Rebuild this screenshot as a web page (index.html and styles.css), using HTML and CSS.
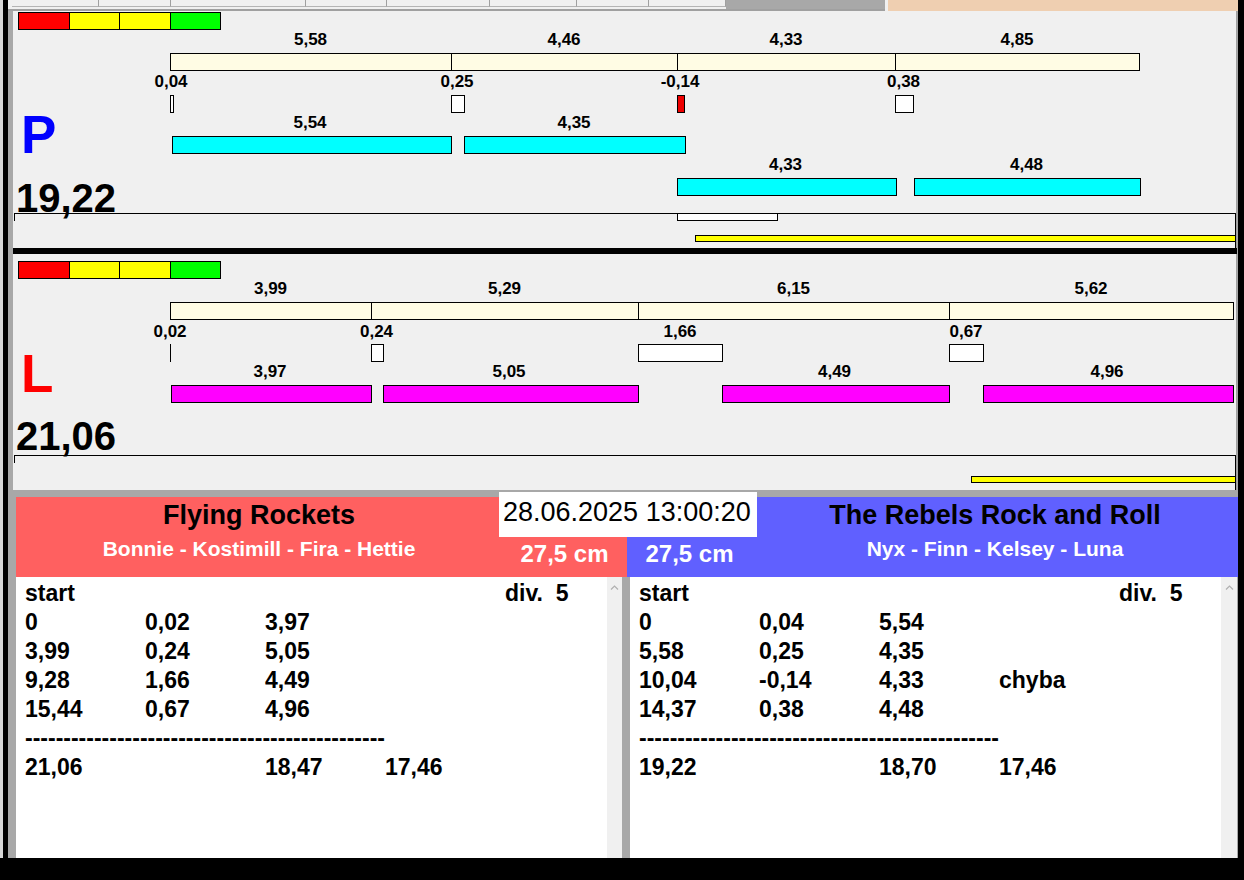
FILE: index.html
```html
<!DOCTYPE html>
<html>
<head>
<meta charset="utf-8">
<link rel="stylesheet" href="styles.css">
</head>
<body>
<div class="screen">
  <div class="edge"></div>
  <div class="client">
    <div class="tabs">
      <div class="tabrow">
        <div class="tab t1"></div>
        <div class="tab t2"></div>
        <div class="tab t3"></div>
        <div class="tab t4"></div>
        <div class="tab t5"></div>
        <div class="tab t6"></div>
        <div class="tab t7"></div>
        <div class="tab t8"></div>
        <div class="tab-empty"></div>
      </div>
      <div class="tabgap"></div>
      <div class="peach"></div>
    </div>

    <div class="panel panel-p">
      <div class="scale"><i class="seg s-red"></i><i class="seg s-yel"></i><i class="seg s-yel"></i><i class="seg s-grn"></i></div>
      <div class="letter letter-p">P</div>
      <div class="total">19,22</div>
      <div class="track">
        <div class="tbar tbar-white" style="left:663px;width:101px"></div>
        <div class="tbar tbar-yellow" style="left:681px;width:541px"></div>
      </div>

      <div class="lbl pu-l1" style="left:297.5px">5,58</div>
      <div class="lbl pu-l1" style="left:551px">4,46</div>
      <div class="lbl pu-l1" style="left:773px">4,33</div>
      <div class="lbl pu-l1" style="left:1004px">4,85</div>
      <div class="bar cream pu-b1" style="left:157px;width:282px"></div>
      <div class="bar cream pu-b1" style="left:438px;width:227px"></div>
      <div class="bar cream pu-b1" style="left:664px;width:219px"></div>
      <div class="bar cream pu-b1" style="left:882px;width:245px"></div>

      <div class="lbl pu-l2" style="left:158px">0,04</div>
      <div class="lbl pu-l2" style="left:444px">0,25</div>
      <div class="lbl pu-l2" style="left:667px">-0,14</div>
      <div class="lbl pu-l2" style="left:890.5px">0,38</div>
      <div class="bar bx-white pu-b2" style="left:157px;width:4px"></div>
      <div class="bar bx-white pu-b2" style="left:438px;width:14px"></div>
      <div class="bar bx-red pu-b2" style="left:664px;width:8px"></div>
      <div class="bar bx-white pu-b2" style="left:882px;width:19px"></div>

      <div class="lbl pu-l3" style="left:297px">5,54</div>
      <div class="lbl pu-l3" style="left:561px">4,35</div>
      <div class="bar cyan pu-b3" style="left:159px;width:280px"></div>
      <div class="bar cyan pu-b3" style="left:451px;width:222px"></div>

      <div class="lbl pu-l4" style="left:772.5px">4,33</div>
      <div class="lbl pu-l4" style="left:1013.5px">4,48</div>
      <div class="bar cyan pu-b4" style="left:664px;width:220px"></div>
      <div class="bar cyan pu-b4" style="left:901px;width:227px"></div>
    </div>

    <div class="divider-black"></div>

    <div class="panel panel-l">
      <div class="scale"><i class="seg s-red"></i><i class="seg s-yel"></i><i class="seg s-yel"></i><i class="seg s-grn"></i></div>
      <div class="letter letter-l">L</div>
      <div class="total">21,06</div>
      <div class="track">
        <div class="tbar tbar-yellow" style="left:957px;width:265px"></div>
      </div>

      <div class="lbl pl-l1" style="left:257.5px">3,99</div>
      <div class="lbl pl-l1" style="left:491.5px">5,29</div>
      <div class="lbl pl-l1" style="left:780.5px">6,15</div>
      <div class="lbl pl-l1" style="left:1078px">5,62</div>
      <div class="bar cream pl-b1" style="left:157px;width:202px"></div>
      <div class="bar cream pl-b1" style="left:358px;width:268px"></div>
      <div class="bar cream pl-b1" style="left:625px;width:312px"></div>
      <div class="bar cream pl-b1" style="left:936px;width:285px"></div>

      <div class="lbl pl-l2" style="left:157px">0,02</div>
      <div class="lbl pl-l2" style="left:363.5px">0,24</div>
      <div class="lbl pl-l2" style="left:667px">1,66</div>
      <div class="lbl pl-l2" style="left:953px">0,67</div>
      <div class="bar bx-line pl-b2" style="left:157px;width:1px"></div>
      <div class="bar bx-white pl-b2" style="left:358px;width:13px"></div>
      <div class="bar bx-white pl-b2" style="left:625px;width:85px"></div>
      <div class="bar bx-white pl-b2" style="left:936px;width:35px"></div>

      <div class="lbl pl-l3" style="left:257px">3,97</div>
      <div class="lbl pl-l3" style="left:496px">5,05</div>
      <div class="lbl pl-l3" style="left:821.5px">4,49</div>
      <div class="lbl pl-l3" style="left:1094px">4,96</div>
      <div class="bar mag pl-b3" style="left:158px;width:201px"></div>
      <div class="bar mag pl-b3" style="left:370px;width:256px"></div>
      <div class="bar mag pl-b3" style="left:709px;width:228px"></div>
      <div class="bar mag pl-b3" style="left:970px;width:251px"></div>
    </div>

    <div class="gap"></div>

    <div class="bottom">
      <div class="teams">
        <div class="team team-red">
          <div class="names">
            <div class="team-title">Flying Rockets</div>
            <div class="members">Bonnie - Kostimill - Fira - Hettie</div>
          </div>
          <div class="cm">27,5 cm</div>
        </div>
        <div class="team team-blue">
          <div class="cm">27,5 cm</div>
          <div class="names">
            <div class="team-title">The Rebels Rock and Roll</div>
            <div class="members">Nyx - Finn - Kelsey - Luna</div>
          </div>
        </div>
      </div>
      <div class="lists">
        <div class="list">
          <div class="row"><span>start</span><span></span><span></span><span></span><span>div.&nbsp;&nbsp;5</span></div>
          <div class="row"><span>0</span><span>0,02</span><span>3,97</span><span></span><span></span></div>
          <div class="row"><span>3,99</span><span>0,24</span><span>5,05</span><span></span><span></span></div>
          <div class="row"><span>9,28</span><span>1,66</span><span>4,49</span><span></span><span></span></div>
          <div class="row"><span>15,44</span><span>0,67</span><span>4,96</span><span></span><span></span></div>
          <div class="dashes">-----------------------------------------------</div>
          <div class="row"><span>21,06</span><span></span><span>18,47</span><span>17,46</span><span></span></div>
        </div>
        <div class="scroll"><svg width="9" height="5" viewBox="0 0 9 5"><polyline points="1,4.5 4.5,1 8,4.5" fill="none" stroke="#b0b0b0" stroke-width="1.2"/></svg></div>
        <div class="split"></div>
        <div class="list">
          <div class="row"><span>start</span><span></span><span></span><span></span><span>div.&nbsp;&nbsp;5</span></div>
          <div class="row"><span>0</span><span>0,04</span><span>5,54</span><span></span><span></span></div>
          <div class="row"><span>5,58</span><span>0,25</span><span>4,35</span><span></span><span></span></div>
          <div class="row"><span>10,04</span><span>-0,14</span><span>4,33</span><span>chyba</span><span></span></div>
          <div class="row"><span>14,37</span><span>0,38</span><span>4,48</span><span></span><span></span></div>
          <div class="dashes">-----------------------------------------------</div>
          <div class="row"><span>19,22</span><span></span><span>18,70</span><span>17,46</span><span></span></div>
        </div>
        <div class="scroll scroll-r"><svg width="9" height="5" viewBox="0 0 9 5"><polyline points="1,4.5 4.5,1 8,4.5" fill="none" stroke="#b0b0b0" stroke-width="1.2"/></svg></div>
      </div>
      <div class="clock">28.06.2025 13:00:20</div>
    </div>
  </div>
</div>
</body>
</html>
```

FILE: styles.css
```css
html, body {
  margin: 0;
  padding: 0;
  background: #000;
}
body {
  font-family: "Liberation Sans", Arial, sans-serif;
  color: #000;
}
.screen {
  width: 1244px;
  height: 880px;
  display: flex;
  align-items: flex-start;
  background: #000;
  overflow: hidden;
}
.edge {
  width: 3px;
  height: 858px;
  background: #d8d8d8;
  flex: none;
}
.client {
  margin-left: 5px;
  width: 1230px;
  height: 858px;
  background: #a8a8a8;
  display: flex;
  flex-direction: column;
  flex: none;
}

/* tab strip (cut off at the top) */
.tabs {
  display: flex;
  height: 11px;
  flex: none;
}
.tabrow {
  display: flex;
  width: 877px;
  box-sizing: border-box;
  padding-left: 4px;
  background: #f0f0f0;
  border-bottom: 2px solid #a0a0a0;
}
.tab {
  box-sizing: border-box;
  height: 7px;
  border-right: 1px solid #a0a0a0;
  border-bottom: 1px solid #b4b4b4;
}
.t1 { width: 87px; }
.t2 { width: 72px; }
.t3 { width: 135px; }
.t4 { width: 81px; }
.t5 { width: 103px; }
.t6 { width: 87px; }
.t7 { width: 72px; }
.t8 { width: 77px; }
.tab-empty {
  width: 159px;
  height: 9px;
  background: #a8a8a8;
}
.tabgap {
  width: 3px;
  background: #f0f0f0;
}
.peach {
  flex: 1;
  background: #efcfb1;
}

/* chart panels */
.panel {
  position: relative;
  margin-left: 5px;
  width: 1224px;
  box-sizing: border-box;
  background: #f0f0f0;
  border-right: 1px solid #a0a0a0;
  display: flex;
  flex-direction: column;
  align-items: flex-start;
  flex: none;
}
.panel-p { height: 237px; }
.panel-l { height: 236px; }
.divider-black {
  margin-left: 5px;
  width: 1224px;
  height: 6px;
  background: #000;
  flex: none;
}
.gap {
  height: 7px;
  flex: none;
}

.scale {
  display: flex;
  width: 203px;
  height: 18px;
  box-sizing: border-box;
  border: 1px solid #000;
  margin-left: 5px;
}
.panel-p .scale { margin-top: 1px; }
.panel-l .scale { margin-top: 7px; }
.seg {
  flex: 1;
  border-right: 1px solid #000;
}
.seg:last-child { border-right: 0; }
.s-red { background: #ff0000; }
.s-yel { background: #ffff00; }
.s-grn { background: #00ff00; }

.letter {
  font-size: 53px;
  font-weight: bold;
  line-height: 53px;
  margin-left: 8px;
}
.letter-p { color: #0000ff; margin-top: 78px; }
.letter-l { color: #ff0000; margin-top: 68px; }

.total {
  font-size: 40px;
  font-weight: bold;
  line-height: 30px;
  margin-left: 3px;
}
.panel-p .total { margin-top: 22px; }
.panel-l .total { margin-top: 21px; }

.track {
  position: relative;
  margin-top: auto;
  margin-left: 1px;
  width: 1222px;
  height: 35px;
  box-sizing: border-box;
  border-top: 1px solid #000;
  border-right: 1px solid #000;
}
.track::before {
  content: "";
  position: absolute;
  left: 0;
  top: 0;
  width: 1px;
  height: 7px;
  background: #000;
}
.tbar {
  position: absolute;
  box-sizing: border-box;
  border: 1px solid #000;
}
.tbar-white {
  top: -1px;
  height: 8px;
  background: #fff;
}
.tbar-yellow {
  height: 7px;
  background: #ffff00;
}
.panel-p .tbar-yellow { top: 21px; }
.panel-l .tbar-yellow { top: 20px; }

.bar {
  position: absolute;
  height: 18px;
  box-sizing: border-box;
  border: 1px solid #000;
}
.cream { background: #fffce4; }
.cyan { background: #00ffff; }
.mag { background: #ff00ff; }
.bx-white { background: #fff; }
.bx-red { background: #ee0000; }
.bx-line { border: 0; background: #000; }

.lbl {
  position: absolute;
  width: 80px;
  margin-left: -40px;
  text-align: center;
  font-size: 17px;
  font-weight: bold;
  line-height: 20px;
  white-space: nowrap;
}
.pu-l1 { top: 19px; }
.pu-b1 { top: 42px; }
.pu-l2 { top: 61px; }
.pu-b2 { top: 84px; }
.pu-l3 { top: 102px; }
.pu-b3 { top: 125px; }
.pu-l4 { top: 144px; }
.pu-b4 { top: 167px; }
.pl-l1 { top: 25px; }
.pl-b1 { top: 48px; }
.pl-l2 { top: 68px; }
.pl-b2 { top: 90px; }
.pl-l3 { top: 108px; }
.pl-b3 { top: 131px; }

/* bottom: teams and lists */
.bottom {
  position: relative;
  margin-left: 8px;
  width: 1222px;
  height: 361px;
  display: flex;
  flex-direction: column;
  flex: none;
}
.teams {
  display: flex;
  height: 80px;
  flex: none;
}
.team {
  width: 611px;
  display: flex;
}
.team-red { background: #ff6060; }
.team-blue { background: #6060ff; }
.names {
  width: 486px;
  display: flex;
  flex-direction: column;
  align-items: center;
}
.team-title {
  margin-top: 3px;
  font-size: 27px;
  font-weight: bold;
  line-height: 30px;
  color: #000;
  white-space: nowrap;
}
.members {
  margin-top: 7px;
  font-size: 21px;
  font-weight: bold;
  line-height: 24px;
  color: #fff;
  white-space: nowrap;
}
.cm {
  width: 125px;
  box-sizing: border-box;
  padding-top: 43px;
  text-align: center;
  font-size: 24px;
  font-weight: bold;
  line-height: 28px;
  color: #fff;
  white-space: nowrap;
}
.clock {
  position: absolute;
  left: 483px;
  top: -5px;
  width: 258px;
  height: 45px;
  box-sizing: border-box;
  padding: 5px 0 0 4px;
  background: #fff;
  font-size: 27px;
  line-height: 30px;
  color: #000;
  white-space: nowrap;
}
.lists {
  display: flex;
  height: 281px;
  flex: none;
}
.list {
  width: 591px;
  box-sizing: border-box;
  padding: 1.5px 0 0 9px;
  background: #fff;
  font-size: 23px;
  font-weight: bold;
  line-height: 29px;
  color: #000;
}
.row {
  display: grid;
  grid-template-columns: repeat(4, 120px) auto;
  height: 29px;
  white-space: nowrap;
}
.dashes {
  height: 29px;
  white-space: nowrap;
}
.scroll {
  width: 15px;
  box-sizing: border-box;
  padding-top: 8px;
  background: #f0f0f0;
  display: flex;
  justify-content: center;
  align-items: flex-start;
}
.scroll-r { width: 16px; }
.split {
  width: 8px;
  background: #a8a8a8;
}
```
